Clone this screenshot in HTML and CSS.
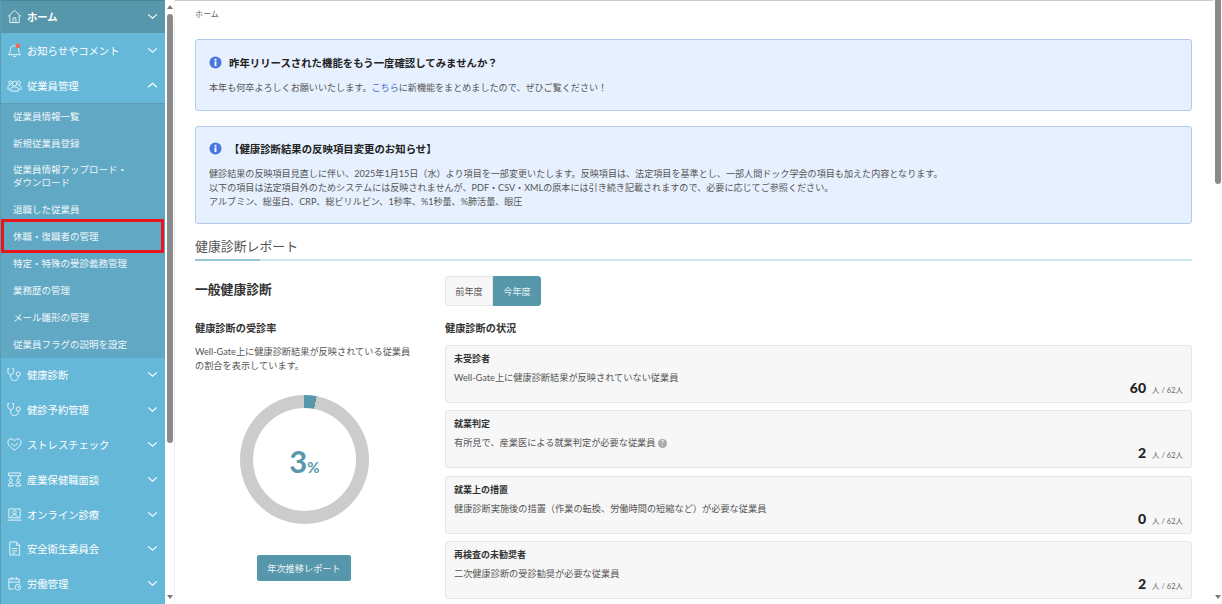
FILE: index.html
```html
<!DOCTYPE html>
<html lang="ja">

<head>
  <meta charset="UTF-8">
  <meta name="viewport" content="width=device-width, initial-scale=1.0">
  <title>ホーム</title>
  <link rel="stylesheet" href="styles.css">
</head>

<body>
  <div class="layout">
    <nav class="sidebar">
      <div class="nav-item home">
        <svg class="nav-icon" viewBox="0 0 16 16"><path d="M1 8 8 1.500 15 8M3 6.500V14.500H13V6.500M6.500 14.500V9.500H9.500V14.500"/></svg>
        <span class="nav-label">ホーム</span>
        <svg class="chev" viewBox="0 0 12 8"><path d="M1 1.500 6 6 11 1.500"/></svg>
      </div>
      <div class="nav-item">
        <svg class="nav-icon" viewBox="0 0 16 16"><path d="M1.500 12.500C3 11 3.500 9.500 3.500 7.500 3.500 4.500 5.500 3 8 3 10.500 3 12.500 4.500 12.500 7.500 12.500 9.500 13 11 14.500 12.500ZM6.500 14.500H9.500"/><circle class="dot" cx="11.500" cy="3" r="2.500"/></svg>
        <span class="nav-label">お知らせやコメント</span>
        <svg class="chev" viewBox="0 0 12 8"><path d="M1 1.500 6 6 11 1.500"/></svg>
      </div>
      <div class="nav-item">
        <svg class="nav-icon" viewBox="0 0 16 16"><circle cx="8" cy="6" r="2.500"/><circle cx="3.500" cy="5" r="1.800"/><circle cx="12.500" cy="5" r="1.800"/><path d="M4 14V11.500C4 10 6 9.500 8 9.500 10 9.500 12 10 12 11.500V14ZM3 12H1V9.500C1 8.500 2 8 3.500 8M13 12H15V9.500C15 8.500 14 8 12.500 8"/></svg>
        <span class="nav-label">従業員管理</span>
        <svg class="chev" viewBox="0 0 12 8"><path d="M1 6 6 1.500 11 6"/></svg>
      </div>
      <div class="subnav">
        <div class="sub-item">従業員情報一覧</div>
        <div class="sub-item">新規従業員登録</div>
        <div class="sub-item two-line">従業員情報アップロード・<br>ダウンロード</div>
        <div class="sub-item">退職した従業員</div>
        <div class="sub-item marked">休職・復職者の管理</div>
        <div class="sub-item">特定・特殊の受診義務管理</div>
        <div class="sub-item">業務歴の管理</div>
        <div class="sub-item">メール雛形の管理</div>
        <div class="sub-item">従業員フラグの説明を設定</div>
      </div>
      <div class="nav-item">
        <svg class="nav-icon" viewBox="0 0 16 16"><path d="M2.500 1.500H1V5C1 7 2.500 8 4 8 5.500 8 7 7 7 5V1.500H5.500M4 8V11C4 13.500 6 14.500 8 14.500 10 14.500 12 13 12 11V9.500"/><circle cx="12" cy="7.500" r="2.200"/></svg>
        <span class="nav-label">健康診断</span>
        <svg class="chev" viewBox="0 0 12 8"><path d="M1 1.500 6 6 11 1.500"/></svg>
      </div>
      <div class="nav-item">
        <svg class="nav-icon" viewBox="0 0 16 16"><path d="M2.500 1.500H1V5C1 7 2.500 8 4 8 5.500 8 7 7 7 5V1.500H5.500M4 8V11C4 13.500 6 14.500 8 14.500 10 14.500 12 13 12 11V9.500"/><circle cx="12" cy="7.500" r="2.200"/></svg>
        <span class="nav-label">健診予約管理</span>
        <svg class="chev" viewBox="0 0 12 8"><path d="M1 1.500 6 6 11 1.500"/></svg>
      </div>
      <div class="nav-item">
        <svg class="nav-icon" viewBox="0 0 16 16"><path d="M8 14C3 10.500 1 8.500 1 5.500 1 3.500 2.500 2 4.500 2 6 2 7.300 2.800 8 4 8.700 2.800 10 2 11.500 2 13.500 2 15 3.500 15 5.500 15 8.500 13 10.500 8 14ZM4.500 7 8 9.500 11.500 7"/></svg>
        <span class="nav-label">ストレスチェック</span>
        <svg class="chev" viewBox="0 0 12 8"><path d="M1 1.500 6 6 11 1.500"/></svg>
      </div>
      <div class="nav-item">
        <svg class="nav-icon" viewBox="0 0 16 16"><path d="M1.500 1H14.500V4H1.500ZM4 4V7M12 4V7"/><circle cx="4" cy="9" r="1.700"/><circle cx="12" cy="9" r="1.700"/><path d="M1.500 15V13C1.500 11.500 6.500 11.500 6.500 13V15ZM9.500 15V13C9.500 11.500 14.500 11.500 14.500 13V15Z"/></svg>
        <span class="nav-label">産業保健職面談</span>
        <svg class="chev" viewBox="0 0 12 8"><path d="M1 1.500 6 6 11 1.500"/></svg>
      </div>
      <div class="nav-item">
        <svg class="nav-icon" viewBox="0 0 16 16"><path d="M2 2H14V11.500H2ZM.5 14H15.500"/><circle cx="8" cy="5.500" r="1.800"/><path d="M4.500 11C4.500 9 6 8.500 8 8.500 10 8.500 11.500 9 11.500 11"/></svg>
        <span class="nav-label">オンライン診療</span>
        <svg class="chev" viewBox="0 0 12 8"><path d="M1 1.500 6 6 11 1.500"/></svg>
      </div>
      <div class="nav-item">
        <svg class="nav-icon" viewBox="0 0 16 16"><path d="M3 1H10L13.500 4.500V15H3ZM10 1V4.500H13.500M5.500 8H11M5.500 10.500H11M5.500 13H9"/></svg>
        <span class="nav-label">安全衛生委員会</span>
        <svg class="chev" viewBox="0 0 12 8"><path d="M1 1.500 6 6 11 1.500"/></svg>
      </div>
      <div class="nav-item">
        <svg class="nav-icon" viewBox="0 0 16 16"><path d="M7 14H2V3H13V8M2 6.500H13M5 1V4M10 1V4"/><circle cx="11.500" cy="12" r="3"/><path d="M11.500 10.500V12H13"/></svg>
        <span class="nav-label">労働管理</span>
        <svg class="chev" viewBox="0 0 12 8"><path d="M1 1.500 6 6 11 1.500"/></svg>
      </div>
    </nav>

    <div class="scroll-bar side-scroll">
      <span class="arrow-up"></span>
      <span class="thumb"></span>
      <span class="arrow-down"></span>
    </div>

    <main class="content">
      <div class="breadcrumb">ホーム</div>

      <section class="notice first">
        <h3 class="notice-title">
          <svg class="info" viewBox="0 0 14 14"><circle cx="7" cy="7" r="6.500"/><rect x="6" y="5.800" width="2" height="5" fill="#fff"/><rect x="6" y="3" width="2" height="2" fill="#fff"/></svg>
          昨年リリースされた機能をもう一度確認してみませんか？
        </h3>
        <p>本年も何卒よろしくお願いいたします。<a href="#">こちら</a>に新機能をまとめましたので、ぜひご覧ください！</p>
      </section>

      <section class="notice second">
        <h3 class="notice-title">
          <svg class="info" viewBox="0 0 14 14"><circle cx="7" cy="7" r="6.500"/><rect x="6" y="5.800" width="2" height="5" fill="#fff"/><rect x="6" y="3" width="2" height="2" fill="#fff"/></svg>
          <span>【健康診断結果の反映項目変更のお知らせ】</span>
        </h3>
        <p>健診結果の反映項目見直しに伴い、2025年1月15日（水）より項目を一部変更いたします。反映項目は、法定項目を基準とし、一部人間ドック学会の項目も加えた内容となります。<br>以下の項目は法定項目外のためシステムには反映されませんが、PDF・CSV・XMLの原本には引き続き記載されますので、必要に応じてご参照ください。<br>アルブミン、総蛋白、CRP、総ビリルビン、1秒率、%1秒量、%肺活量、眼圧</p>
      </section>

      <h2 class="report-title">健康診断レポート</h2>

      <div class="head-row">
        <div class="left-col"><h3 class="general-title">一般健康診断</h3></div>
        <div class="year-tabs">
          <span class="tab">前年度</span>
          <span class="tab active">今年度</span>
        </div>
      </div>

      <div class="report-row">
        <div class="left-col">
          <h4 class="col-title">健康診断の受診率</h4>
          <p class="col-text">Well-Gate上に健康診断結果が反映されている従業員の割合を表示しています。</p>
          <div class="donut">
            <div class="donut-hole"><b>3</b><span>%</span></div>
          </div>
          <button class="report-btn">年次推移レポート</button>
        </div>
        <div class="right-col">
          <h4 class="col-title">健康診断の状況</h4>
          <div class="stat-card">
            <h5>未受診者</h5>
            <p>Well-Gate上に健康診断結果が反映されていない従業員</p>
            <div class="stat-num"><b>60</b><span>人 / 62人</span></div>
          </div>
          <div class="stat-card">
            <h5>就業判定</h5>
            <p>有所見で、産業医による就業判定が必要な従業員 <span class="help">?</span></p>
            <div class="stat-num"><b>2</b><span>人 / 62人</span></div>
          </div>
          <div class="stat-card">
            <h5>就業上の措置</h5>
            <p>健康診断実施後の措置（作業の転換、労働時間の短縮など）が必要な従業員</p>
            <div class="stat-num"><b>0</b><span>人 / 62人</span></div>
          </div>
          <div class="stat-card">
            <h5>再検査の未勧奨者</h5>
            <p>二次健康診断の受診勧奨が必要な従業員</p>
            <div class="stat-num"><b>2</b><span>人 / 62人</span></div>
          </div>
        </div>
      </div>
    </main>

    <div class="scroll-bar page-scroll">
      <span class="thumb"></span>
      <span class="arrow-down"></span>
    </div>
  </div>
</body>

</html>
```

FILE: styles.css
```css
* {
  box-sizing: border-box;
}

html,
body {
  margin: 0;
  height: 100%;
  overflow: hidden;
}

body {
  font-family: Lato, "Noto Sans CJK JP", sans-serif;
  font-size: 9.2px;
  color: #555;
  background-color: #fff;
}

h2,
h3,
h4,
h5,
p {
  margin: 0;
}

.layout {
  display: flex;
  height: 604px;
}

/* sidebar */
.sidebar {
  width: 165px;
  flex: none;
  height: 604px;
  overflow: hidden;
  background-color: #66b8d9;
  border-left: 1px solid #5a9cb3;
  color: #fff;
}

.nav-item {
  display: flex;
  align-items: center;
  height: 34.800px;
  padding: 0 6px 0 6px;
  font-size: 10.3px;
}

.nav-item.home {
  height: 33px;
  background-color: #5797ab;
  box-shadow: inset 0 1px #4a8699;
  font-weight: 700;
}

.nav-icon {
  width: 15px;
  height: 15px;
  flex: none;
  fill: none;
  stroke: #eaf6fa;
  stroke-width: 1;
}

.nav-icon .dot {
  fill: #ee6a55;
  stroke: none;
}

.nav-label {
  flex: 1;
  margin-left: 5px;
}

.chev {
  width: 11px;
  height: 7px;
  margin-right: 1px;
  fill: none;
  stroke: #fff;
  stroke-width: 1.200;
}

.subnav {
  background-color: #61a8c4;
  box-shadow: inset 0 1px #5a9cb3;
}

.sub-item {
  display: flex;
  align-items: center;
  height: 27px;
  padding-left: 12px;
  font-size: 9.5px;
  color: #eef7fa;
}

.sub-item.two-line {
  height: 39px;
  line-height: 13px;
}

.sub-item.marked {
  position: relative;
  width: 163px;
  height: 34px;
  margin: -3.500px 0;
  border: 3px solid #e8141c;
  padding-left: 9px;
}

/* scrollbars */
.scroll-bar {
  position: relative;
  flex: none;
  height: 604px;
  background-color: #fff;
}

.side-scroll {
  width: 10px;
  border-right: 1px solid #f0f0f0;
}

.arrow-up,
.arrow-down {
  position: absolute;
  left: 2px;
  width: 0;
  height: 0;
  border-left: 3px solid transparent;
  border-right: 3px solid transparent;
}

.arrow-up {
  top: 5px;
  border-bottom: 4px solid #777;
}

.arrow-down {
  bottom: 5px;
  border-top: 4px solid #777;
}

.thumb {
  position: absolute;
  left: 2px;
  top: 14px;
  width: 6px;
  border-radius: 3px;
  background-color: #8a8a8a;
}

.side-scroll .thumb {
  height: 429px;
}

.page-scroll {
  width: 9px;
}

.page-scroll .thumb {
  top: 0;
  height: 184px;
  border-radius: 0 0 3px 3px;
}

/* content */
.content {
  flex: 1;
  min-width: 0;
  height: 604px;
  padding: 7px 21px 0 20px;
  overflow: hidden;
  border-top: 1px solid #ccc;
}

.breadcrumb {
  height: 31px;
  font-size: 8px;
  color: #666;
}

.notice {
  background-color: #e6f0fe;
  border: 1px solid #b3c9ec;
  border-radius: 3px;
  padding: 14px 13px 0 13px;
}

.notice.first {
  height: 72px;
  margin-bottom: 15px;
}

.notice.second {
  height: 98px;
  margin-bottom: 14px;
  padding-top: 13px;
}

.notice-title {
  display: flex;
  align-items: center;
  gap: 7px;
  height: 16px;
  font-size: 10.4px;
  font-weight: 700;
  color: #222;
  margin-bottom: 11px;
}

.info {
  width: 13px;
  height: 13px;
  fill: #4a76e0;
}

.notice p {
  font-size: 9.080px;
  line-height: 14px;
  color: #555;
}

.notice a {
  color: #3f6ad0;
  text-decoration: none;
}

.report-title {
  position: relative;
  height: 23px;
  margin-bottom: 15px;
  font-size: 12.900px;
  font-weight: 400;
  line-height: 16px;
  color: #555;
  border-bottom: 2px solid #cfe6ee;
}

.report-title::after {
  content: "";
  position: absolute;
  left: 0;
  bottom: -2px;
  width: 65px;
  height: 2px;
  background-color: #97c6d6;
}

.head-row {
  display: flex;
  height: 30px;
  margin-bottom: 14px;
}

.left-col {
  width: 250px;
  flex: none;
}

.general-title {
  font-size: 12.800px;
  font-weight: 700;
  color: #333;
  line-height: 26px;
}

.year-tabs {
  display: flex;
  height: 30px;
}

.tab {
  display: flex;
  align-items: center;
  justify-content: center;
  width: 48px;
  color: #555;
  background-color: #f7f7f7;
  border: 1px solid #e6e6e6;
  border-radius: 3px 0 0 3px;
}

.tab.active {
  background-color: #5797ab;
  color: #e8f3f6;
  border-color: #5797ab;
  border-radius: 0 3px 3px 0;
}

.report-row {
  display: flex;
}

.col-title {
  font-size: 10.200px;
  font-weight: 700;
  color: #333;
  height: 17px;
  margin-bottom: 8px;
}

.col-text {
  width: 222px;
  line-height: 14px;
}

.donut {
  width: 129px;
  height: 129px;
  margin: 22px 0 0 45px;
  border-radius: 50%;
  background: conic-gradient(#5797ab 0 3%, #ccc 3% 100%);
  display: flex;
  align-items: center;
  justify-content: center;
}

.donut-hole {
  width: 103px;
  height: 103px;
  border-radius: 50%;
  background-color: #fff;
  color: #5797ab;
  display: flex;
  align-items: baseline;
  justify-content: center;
  line-height: 107px;
}

.donut-hole b {
  font-size: 31px;
}

.donut-hole span {
  font-size: 15px;
  font-weight: 700;
}

.report-btn {
  display: block;
  width: 94px;
  height: 26px;
  margin: 31px 0 0 62px;
  background-color: #5797ab;
  color: #eef6f8;
  border: none;
  border-radius: 2px;
  font-family: inherit;
  font-size: 9.200px;
}

.right-col {
  flex: 1;
  min-width: 0;
}

.stat-card {
  position: relative;
  height: 58px;
  margin-bottom: 7.300px;
  padding: 6px 8px;
  background-color: #f7f7f7;
  border: 1px solid #e6e6e6;
  border-radius: 3px;
}

.stat-card h5 {
  font-size: 9px;
  font-weight: 700;
  color: #333;
  margin-bottom: 5px;
}

.stat-card p {
  font-size: 9.200px;
  color: #555;
}

.help {
  display: inline-block;
  width: 9px;
  height: 9px;
  border-radius: 50%;
  background-color: #aaa;
  color: #fff;
  font-size: 7px;
  line-height: 9px;
  text-align: center;
}

.stat-num {
  position: absolute;
  right: 8px;
  bottom: 6px;
  display: flex;
  align-items: baseline;
  gap: 6px;
}

.stat-num b {
  font-size: 14px;
  font-weight: 900;
  color: #222;
}

.stat-num span {
  font-size: 7.500px;
  color: #666;
}
```
